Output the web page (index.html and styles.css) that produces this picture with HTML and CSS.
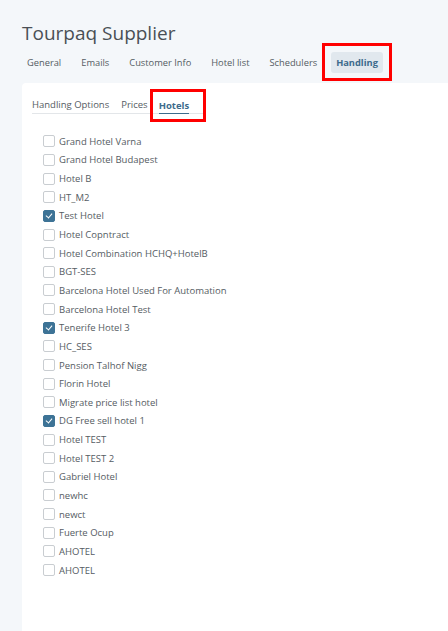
FILE: index.html
```html
<!DOCTYPE html>
<html>
<head>
<meta charset="utf-8">
<link rel="stylesheet" href="styles.css">
</head>
<body>
<div class="page">
  <h1 class="title">Tourpaq Supplier</h1>
  <nav class="tabs">
    <span class="tab">General</span>
    <span class="tab">Emails</span>
    <span class="tab">Customer Info</span>
    <span class="tab">Hotel list</span>
    <span class="tab">Schedulers</span>
    <span class="tab-wrap hl"><span class="tab active">Handling</span></span>
  </nav>
  <div class="panel">
    <div class="subtabs">
      <span class="subtab">Handling Options</span>
      <span class="subtab">Prices</span>
      <span class="subtab-wrap hl2"><span class="subtab active">Hotels</span></span>
    </div>
    <ul class="list">
      <li><span class="cb"></span>Grand Hotel Varna</li>
      <li><span class="cb"></span>Grand Hotel Budapest</li>
      <li><span class="cb"></span>Hotel B</li>
      <li><span class="cb"></span>HT_M2</li>
      <li><span class="cb on"></span>Test Hotel</li>
      <li><span class="cb"></span>Hotel Copntract</li>
      <li><span class="cb"></span>Hotel Combination HCHQ+HotelB</li>
      <li><span class="cb"></span>BGT-SES</li>
      <li><span class="cb"></span>Barcelona Hotel Used For Automation</li>
      <li><span class="cb"></span>Barcelona Hotel Test</li>
      <li><span class="cb on"></span>Tenerife Hotel 3</li>
      <li><span class="cb"></span>HC_SES</li>
      <li><span class="cb"></span>Pension Talhof Nigg</li>
      <li><span class="cb"></span>Florin Hotel</li>
      <li><span class="cb"></span>Migrate price list hotel</li>
      <li><span class="cb on"></span>DG Free sell hotel 1</li>
      <li><span class="cb"></span>Hotel TEST</li>
      <li><span class="cb"></span>Hotel TEST 2</li>
      <li><span class="cb"></span>Gabriel Hotel</li>
      <li><span class="cb"></span>newhc</li>
      <li><span class="cb"></span>newct</li>
      <li><span class="cb"></span>Fuerte Ocup</li>
      <li><span class="cb"></span>AHOTEL</li>
      <li><span class="cb"></span>AHOTEL</li>
    </ul>
  </div>
</div>
</body>
</html>
```

FILE: styles.css
```css
html, body {
  margin: 0;
  padding: 0;
  height: 100%;
  background: #f4f7fa;
  font-family: "Open Sans", "Noto Sans", sans-serif;
  overflow: hidden;
}
.page {
  padding: 20px 0 0 22px;
  display: flex;
  flex-direction: column;
  height: 611px;
}
.title {
  margin: 0;
  font-size: 19px;
  font-weight: 400;
  color: #4a4f55;
  line-height: 26px;
}
.tabs {
  display: flex;
  align-items: center;
  height: 32px;
  margin-bottom: 5px;
  padding-left: 5px;
}
.tab {
  font-size: 9.3px;
  color: #555c63;
  margin-right: 20px;
}
.tab-wrap {
  margin-left: -12px;
}
.tab.active {
  display: inline-block;
  margin: 0;
  padding: 4px 5px;
  background: #e1e8ee;
  border-radius: 3px;
  font-weight: 700;
  color: #3d6b8c;
}
.hl {
  outline: 3px solid #f00;
  padding: 3px 6px 5px;
}
.panel {
  flex: 1;
  background: #fff;
  border-top-left-radius: 4px;
  padding: 8px 0 0 10px;
}
.subtabs {
  display: inline-flex;
  align-items: flex-end;
  border-bottom: 1px solid #e3e6e9;
  padding-right: 12px;
  height: 20px;
}
.subtab {
  font-size: 9.5px;
  color: #555c63;
  margin-right: 12px;
  padding-bottom: 2px;
}
.subtab-wrap {
  margin-left: -7px;
}
.hl2 {
  outline: 3px solid #f00;
  padding: 0 14px 5px 6px;
  margin-right: -12px;
  margin-bottom: -6px;
}
.subtab.active {
  display: inline-block;
  margin: 0;
  font-weight: 700;
  color: #3d6b8c;
  line-height: 12px;
  padding-bottom: 1px;
  border-bottom: 1px solid #3d6b8c;
}
.list {
  list-style: none;
  margin: 18px 0 0 0;
  padding: 0 0 0 11px;
}
.list li {
  height: 18.65px;
  display: flex;
  align-items: center;
  font-size: 9.5px;
  color: #555c63;
}
.cb {
  width: 10px;
  height: 10px;
  border: 1px solid #c9cdd1;
  border-radius: 2px;
  margin-right: 4px;
  box-sizing: content-box;
  flex: none;
  position: relative;
}
.cb.on {
  background: #3d7396;
  border-color: #3d7396;
}
.cb.on::after {
  content: "";
  position: absolute;
  left: 3px;
  top: 1.5px;
  width: 3px;
  height: 5px;
  border: solid #fff;
  border-width: 0 1.5px 1.5px 0;
  transform: rotate(40deg);
}
```
